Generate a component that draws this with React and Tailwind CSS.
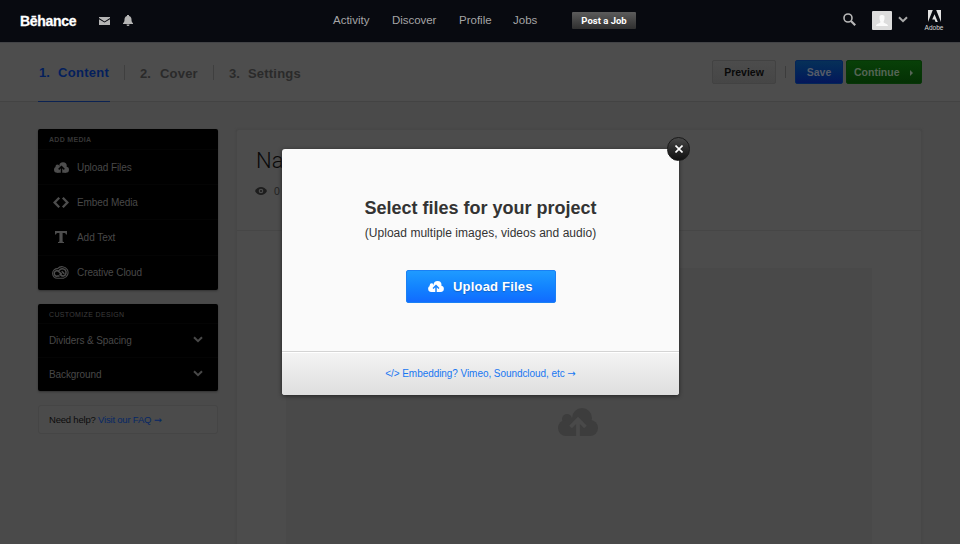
import React from "react";

const Cloud = ({ className, cut }) => (
  <svg viewBox="0 0 40 28" className={className}>
    <g fill="currentColor">
      <circle cx="24" cy="10" r="10" />
      <circle cx="9" cy="11" r="5" />
      <circle cx="8" cy="20" r="8" />
      <circle cx="32" cy="20" r="8" />
      <path d="M8 11h24v17H8z" />
    </g>
    <path d="M20 28.5V13M12.5 19l7.5-7.5 7.5 7.5" fill="none" stroke={cut} strokeWidth="3.8" />
  </svg>
);

const Chevron = ({ className }) => (
  <svg viewBox="0 0 10 7" className={className} fill="none" stroke="currentColor" strokeWidth="2">
    <path d="M1 1.2l4 4 4-4" />
  </svg>
);

const Arrow = () => <span className="font-['DejaVu_Sans'] tracking-normal">→</span>;

const Code = () => (
  <svg viewBox="0 0 16 11" className="h-[11px] w-4" fill="none" stroke="currentColor" strokeWidth="2.3">
    <path d="M6.200 .8L1.6 5.5l4.600 4.700M9.800 .8l4.600 4.7-4.600 4.700" />
  </svg>
);

const TextIcon = () => (
  <svg viewBox="0 0 12 12" className="h-3 w-3" fill="currentColor">
    <path d="M0 0h12v3.600h-1C10.700 2.200 10 1.900 8.600 1.900H7.600v8c0 .8.400 1.100 1.400 1.100v1H3v-1c1 0 1.400-.3 1.400-1.100v-8H3.400C2 1.900 1.300 2.200 1 3.600H0z" />
  </svg>
);

const CreativeCloud = () => (
  <svg viewBox="0 0 18 13" className="h-[13px] w-[18px]" fill="none" stroke="currentColor">
    <path d="M5.600 2.600A6 5.900 0 1 1 11.500 12.300H5.300A4.800 4.800 0 0 1 5.600 2.600z" strokeWidth="1.1" />
    <path d="M9.800 8.400L7 5.700A2.700 2.700 0 1 0 5.400 10.100H7.500M7 4.600A3.800 3.800 0 1 1 11.500 10.100 3.800 3.800 0 0 1 8.900 9.100L7.600 7.900M9.700 5.200l2.600 2.600" strokeWidth="1.500" />
  </svg>
);

const media = [
  { label: "Upload Files", ls: "tracking-[-0.08px]", icon: <Cloud className="h-[11px] w-[15px]" cut="#000" /> },
  { label: "Embed Media", ls: "tracking-[-0.08px]", icon: <Code /> },
  { label: "Add Text", ls: "tracking-[-0.05px]", icon: <TextIcon /> },
  { label: "Creative Cloud", ls: "tracking-[-0.08px]", icon: <CreativeCloud /> },
];

function Header() {
  return (
    <header className="flex h-[42px] shrink-0 items-center bg-[#080a10] text-[#a5a5a6]">
      <div className="ml-5 w-[79px] text-[14px] font-bold tracking-[-0.3px] text-white [-webkit-text-stroke:0.3px_white]">Bēhance</div>
      <svg viewBox="0 0 11 8" className="-mt-[1px] h-2 w-[11px]" fill="#b5b5b5">
        <path d="M0 0h11v1L5.500 4.500 0 1zM0 2.200l5.500 3.400L11 2.200V8H0z" />
      </svg>
      <svg viewBox="0 0 10 11" className="ml-[13px] -mt-[1px] h-[11px] w-[10px]" fill="#b5b5b5">
        <path d="M4 0h2v1c2 .5 2.500 2 2.500 3.500 0 2 .4 2.800 1.500 3.700V9H0v-.8c1.100-.9 1.500-1.700 1.500-3.700C1.500 3 2 1.500 4 1zM3.500 9.500h3a1.500 1.500 0 0 1-3 0z" />
      </svg>
      <nav className="ml-[200px] flex text-[11.5px]">
        <span className="w-[59px]">Activity</span>
        <span className="w-[67px] tracking-[-0.05px]">Discover</span>
        <span className="w-[54px]">Profile</span>
        <span className="w-[59px]">Jobs</span>
      </nav>
      <div className="-mt-[1px] flex h-[17px] w-16 items-center justify-center rounded-[1px] bg-linear-to-b from-[#5c5c5c] to-[#2f2f2f] pt-[1px] font-[Roboto] text-[9.5px] font-bold text-white">Post a Job</div>
      <svg viewBox="0 0 13 13" className="ml-[207px] -mt-[3px] h-[13px] w-[13px]" fill="none" stroke="#b8b8b8">
        <circle cx="5" cy="5" r="4" strokeWidth="1.6" />
        <path d="M8 8l4.200 4.200" strokeWidth="2.200" />
      </svg>
      <svg viewBox="0 0 20 19" className="ml-4 -mt-[1px] h-[19px] w-5">
        <rect width="20" height="19" rx="1" fill="#dcdcdc" />
        <path d="M7.500 5.500C7.500 3.500 12.500 3.500 12.500 5.500 12.800 8 12 10 11.500 11c.3 1.500 4.500 1.500 4.500 4H4c0-2.500 4.200-2.500 4.500-4C8 10 7.200 8 7.500 5.500z" fill="#fafafa" />
      </svg>
      <Chevron className="ml-[6px] mt-[-3px] h-[7px] w-[10px] text-[#a9a9a9]" />
      <div className="ml-[16px] -mt-[1px] flex w-5 flex-col items-center">
        <svg viewBox="0 0 13 12" className="h-3 w-[13px]" fill="#e2e2e2">
          <path d="M0 0h4.800L0 12zM8.200 0H13v12zM6.500 4.200L9.800 12H7.600L6.600 9.500H4.200z" />
        </svg>
        <span className="mt-[1px] text-[6.500px] leading-[9px] text-[#dadada]">Adobe</span>
      </div>
    </header>
  );
}

function Steps() {
  return (
    <div className="flex h-[60px] shrink-0 items-center border-b border-t border-b-[#434343] border-t-[#424346] bg-[#4d4d4d] pl-[38px] pr-[38px] text-[13px] font-bold text-[#2a2a2a]">
      <div className="flex h-[60px] w-[72px] items-center border-b border-[#0b2252] pl-[1px] pt-[3px] text-[#041f5c]">
        <span className="w-[19px]">1.</span><span className="tracking-[0.3px]">Content</span>
      </div>
      <div className="ml-[14px] h-[15px] w-px bg-[#3f3f3f]" />
      <span className="ml-[15px] w-5 pt-[3px]">2.</span>
      <span className="w-[53px] pt-[3px] tracking-[0.2px]">Cover</span>
      <div className="h-[15px] w-px bg-[#3f3f3f]" />
      <span className="ml-[15px] w-[19px] pt-[3px]">3.</span>
      <span className="pt-[3px] tracking-[0.2px]">Settings</span>
      <div className="ml-auto flex items-center text-[10.5px]">
        <div className="flex h-6 w-16 items-center justify-center rounded-[2px] border border-[#424242] bg-linear-to-b from-[#4c4c4c] to-[#464646] pt-[2px] text-[#090909]">Preview</div>
        <div className="ml-[9px] h-3 w-px bg-[#3c3c3c]" />
        <div className="ml-[9px] flex h-6 w-12 items-center justify-center rounded-[2px] border border-[#052558] bg-linear-to-b from-[#063058] to-[#04165a] pt-[2px] text-[#565c68]">Save</div>
        <div className="ml-[3px] flex h-6 w-[76px] items-center rounded-[2px] border border-[#073607] bg-linear-to-b from-[#084008] to-[#043004] pl-[7px] pt-[2px] text-[#566556]">
          Continue
          <svg viewBox="0 0 3 6" className="-mt-[1px] ml-auto mr-[8px] h-[6px] w-[3px]" fill="currentColor"><path d="M0 0l3 3-3 3z" /></svg>
        </div>
      </div>
    </div>
  );
}

function Sidebar() {
  return (
    <aside className="w-[180px] shrink-0 text-[10px] text-[#484848]">
      <section className="h-[161px] rounded-[2px] bg-black shadow-[0_1px_2px_#333]">
        <h2 className="h-5 pl-[11px] text-[7px] font-bold leading-[21px] tracking-[0.3px] text-[#363636]">ADD MEDIA</h2>
        {media.map((m) => (
          <div key={m.label} className="flex h-[35.2px] items-center border-t border-[#040404]">
            <div className="ml-[13px] flex w-5 justify-center text-[#4d4d4d]">{m.icon}</div>
            <span className={"ml-[6px] " + m.ls}>{m.label}</span>
          </div>
        ))}
      </section>
      <section className="mt-[14px] h-[87px] rounded-[2px] bg-black shadow-[0_1px_2px_#333]">
        <h2 className="h-[19px] pl-[11px] text-[7px] leading-[21px] tracking-[0.35px] text-[#3d3d3d]">CUSTOMIZE DESIGN</h2>
        {["Dividers & Spacing", "Background"].map((label) => (
          <div key={label} className="flex h-[34px] items-center justify-between border-t border-[#040404] pl-[11px] pr-[15px] tracking-[-0.1px]">
            {label}
            <Chevron className="h-[7px] w-[10px] -mt-[2px] text-[#484848]" />
          </div>
        ))}
      </section>
      <div className="mt-[14px] flex h-[29px] items-center rounded-[3px] border border-[#454545] bg-[#4b4b4b] pl-[10px] pt-[1px] text-[9.5px] tracking-[-0.2px] text-[#0b0b0b]">
        <span className="whitespace-pre">Need help? </span>
        <span className="text-[#062765]">Visit our FAQ <Arrow /></span>
      </div>
    </aside>
  );
}

function Project() {
  return (
    <main className="ml-[18px] flex w-[686px] flex-col rounded-t-[3px] border border-b-0 border-[#474747] bg-[#4c4c4c] shadow-[0_0_2px_#444]">
      <div className="h-[101px] border-b border-[#464646] pl-[19px]">
        <h1 className="pt-[18px] font-[Roboto] text-[22px] font-light leading-[26px] text-[#080808]">Name Your Project</h1>
        <div className="mt-[10px] flex items-center text-[10.500px] leading-[14px] text-[#222]">
          <svg viewBox="0 0 12 8" className="-ml-[1px] mr-[7px] h-2 w-3">
            <path d="M0 4C2.500-1.200 9.500-1.200 12 4 9.500 9.200 2.500 9.200 0 4z" fill="#1d1d1d" />
            <circle cx="6" cy="4" r="2.300" fill="#4c4c4c" />
            <circle cx="6" cy="4" r="1.100" fill="#1d1d1d" />
          </svg>
          0
        </div>
      </div>
      <div className="mx-[49px] mt-[37px] flex flex-1 justify-center bg-[#494949] pr-[2px] pt-[140px]">
        <Cloud className="h-7 w-10 text-[#3d3d3d]" cut="#494949" />
      </div>
    </main>
  );
}

function Modal() {
  return (
    <div className="absolute left-[282px] top-[149px] flex h-[246px] w-[397px] flex-col rounded-[3px] bg-[#fafafa] text-[#333] shadow-[0_1px_4px_#222]">
      <div className="flex h-[202px] flex-col items-center">
        <h2 className="mt-[47px] text-[18px] font-bold leading-6">Select files for your project</h2>
        <p className="mt-[5px] text-[12px] leading-4 tracking-[0.03px]">(Upload multiple images, videos and audio)</p>
        <button className="mt-[29px] ml-[1px] flex h-[33px] w-[150px] items-center rounded-[2px] border border-[#1a80f4] bg-linear-to-b from-[#1f9bff] to-[#126bff] pl-[21px] text-[13px] font-bold tracking-[0.2px] text-white [text-shadow:0_1px_1px_#1560c0]">
          <Cloud className="mr-[9px] h-[11px] w-[16px]" cut="#1985ff" />
          Upload Files
        </button>
      </div>
      <div className="flex flex-1 items-center justify-center rounded-b-[3px] border-t border-[#d4d4d4] bg-linear-to-b from-[#f4f4f4] to-[#dedede] text-[10px] tracking-[-0.06px] text-[#1877f2] shadow-[inset_0_1px_0_#fff]">
        <span>&lt;/&gt; Embedding? Vimeo, Soundcloud, etc <Arrow /></span>
      </div>
      <button className="absolute -right-[11px] -top-[12px] flex h-6 w-[23px] items-center justify-center rounded-full border border-[#191919] bg-linear-to-b from-[#484848] to-[#111]">
        <svg viewBox="0 0 8 8" className="h-2 w-2" stroke="#fff" strokeWidth="1.600"><path d="M.5.500l7 7M7.500.500l-7 7" /></svg>
      </button>
    </div>
  );
}

export default function App() {
  return (
    <div className="relative flex h-[544px] w-[960px] flex-col overflow-hidden whitespace-nowrap bg-[#4a4a4a] font-['Liberation_Sans',Arial,sans-serif]">
      <Header />
      <Steps />
      <div className="flex min-h-0 flex-1 pl-[38px] pt-[27px]">
        <Sidebar />
        <Project />
      </div>
      <Modal />
    </div>
  );
}
